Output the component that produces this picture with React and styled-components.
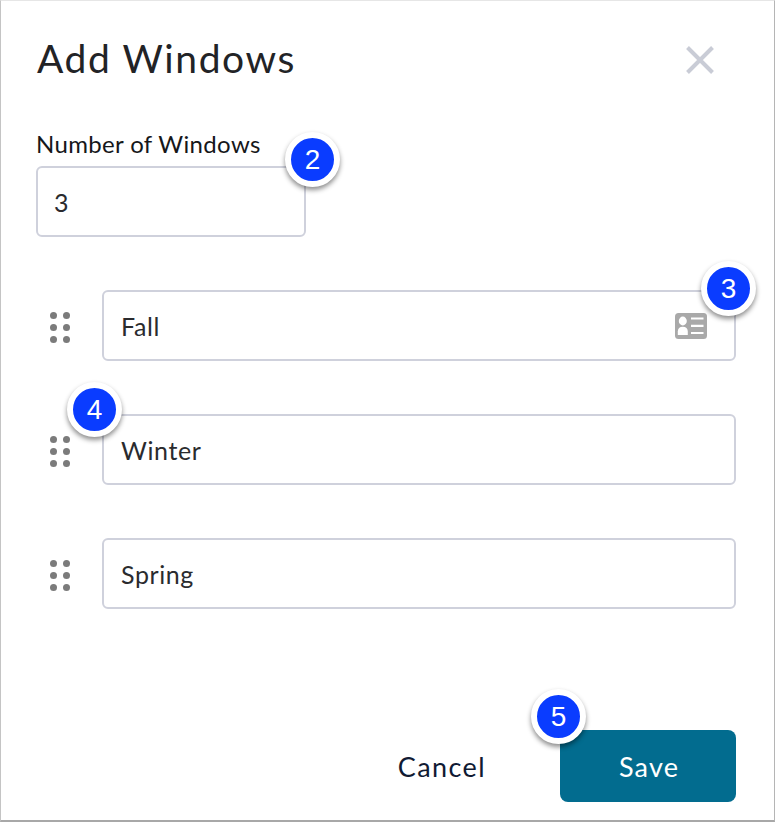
import { createGlobalStyle } from "styled-components";
import styled from "styled-components";

const FONT = '"Lato", "Liberation Sans", sans-serif';

const GlobalStyle = createGlobalStyle`
  html, body {
    margin: 0;
    padding: 0;
    background: #fff;
  }
`;

const Modal = styled.div`
  box-sizing: border-box;
  width: 775px;
  height: 822px;
  padding: 38px 38px 18px 35px;
  display: flex;
  flex-direction: column;
  background: #fff;
  border-top: 1px solid #e6e6e6;
  border-left: 1px solid #c4c4c4;
  border-right: 1px solid #b5b5b5;
  border-bottom: 2px solid #a8a8a8;
  font-family: ${FONT};
`;

const Header = styled.div`
  display: flex;
  align-items: center;
  justify-content: space-between;
  height: 42px;
  padding-left: 1px;
  padding-right: 22px;
`;

const Title = styled.h1`
  margin: -4px 0 0;
  font-size: 39px;
  font-weight: 400;
  letter-spacing: 1.6px;
  color: #222326;
`;

const CloseIcon = styled.svg`
  display: block;
  width: 28px;
  height: 28px;
`;

const Label = styled.label`
  display: block;
  margin-top: 50px;
  height: 25px;
  line-height: 25px;
  font-size: 24px;
  letter-spacing: 0.35px;
  color: #16171a;
`;

const Field = styled.div`
  position: relative;
  box-sizing: border-box;
  display: flex;
  align-items: center;
  justify-content: space-between;
  flex: ${(p) => (p.$fixed ? "none" : 1)};
  width: ${(p) => (p.$fixed ? "270px" : "auto")};
  height: 71px;
  padding: 0 27px 0 ${(p) => (p.$fixed ? 16 : 17)}px;
  border: 2px solid #cfd1dc;
  border-radius: 6px;
  font-size: 25px;
  letter-spacing: 0.6px;
  color: #2a2b2e;
`;

const NumberField = styled(Field)`
  margin-top: 10px;
`;

const WindowList = styled.div`
  display: flex;
  flex-direction: column;
  gap: 53px;
  margin-top: 53px;
`;

const WindowRow = styled.div`
  display: flex;
  align-items: center;
  gap: 32px;
  margin-left: 14px;
`;

const Grip = styled.div`
  display: grid;
  grid-template-columns: 7px 7px;
  grid-auto-rows: 7px;
  column-gap: 6px;
  row-gap: 5px;
  flex: none;
  margin-top: 4px;
`;

const Dot = styled.span`
  border-radius: 50%;
  background: #7b7b7b;
`;

const Badge = styled.div`
  position: absolute;
  top: ${(p) => p.$top}px;
  left: ${(p) => p.$left}px;
  box-sizing: content-box;
  width: 43px;
  height: 43px;
  display: flex;
  align-items: center;
  justify-content: center;
  border: 6px solid #fff;
  border-radius: 50%;
  background: #0a3cff;
  box-shadow: 0 3px 5px rgba(0, 0, 0, 0.45);
  color: #fff;
  font-family: "Liberation Sans", sans-serif;
  font-size: 28px;
  letter-spacing: 0;
  z-index: 2;
`;

const Footer = styled.div`
  margin-top: auto;
  display: flex;
  align-items: center;
  justify-content: flex-end;
  gap: 74px;
`;

const CancelButton = styled.button`
  padding: 0;
  border: 0;
  background: none;
  font-family: ${FONT};
  font-size: 27px;
  letter-spacing: 1.4px;
  color: #101a33;
`;

const SaveButton = styled.button`
  position: relative;
  width: 176px;
  height: 72px;
  padding: 0 0 0 2px;
  border: 0;
  border-radius: 8px;
  background: #026c8f;
  font-family: ${FONT};
  font-size: 27px;
  letter-spacing: 1.2px;
  color: #fff;
`;

const GripDots = () => (
  <Grip>
    {Array.from({ length: 6 }, (_, i) => (
      <Dot key={i} />
    ))}
  </Grip>
);

const CardIcon = () => (
  <svg width="32" height="26" viewBox="0 0 32 26" aria-hidden="true">
    <rect width="32" height="26" rx="3.5" fill="#a9a9a9" />
    <ellipse cx="7.8" cy="8" rx="4" ry="4.4" fill="#fff" />
    <path d="M2.8 22v-3.5c0-3 1.8-4.7 5-4.7s5 1.7 5 4.7V22z" fill="#fff" />
    <path d="M16 5.5h12.5M16 12.8h12.5M16 20h12.5" stroke="#fff" strokeWidth="2.2" />
  </svg>
);

export default function App() {
  return (
    <>
      <GlobalStyle />
      <Modal>
        <Header>
          <Title>Add Windows</Title>
          <CloseIcon viewBox="0 0 28 28" aria-hidden="true">
            <path d="M1.5 1.5l25 25M26.5 1.5l-25 25" stroke="#c9ccd6" strokeWidth="4" />
          </CloseIcon>
        </Header>

        <Label>Number of Windows</Label>
        <NumberField $fixed>
          3
          <Badge $top={-36} $left={247}>2</Badge>
        </NumberField>

        <WindowList>
          <WindowRow>
            <GripDots />
            <Field>
              Fall
              <CardIcon />
              <Badge $top={-31} $left={597}>3</Badge>
            </Field>
          </WindowRow>
          <WindowRow>
            <GripDots />
            <Field>
              Winter
              <Badge $top={-34} $left={-37}>4</Badge>
            </Field>
          </WindowRow>
          <WindowRow>
            <GripDots />
            <Field>Spring</Field>
          </WindowRow>
        </WindowList>

        <Footer>
          <CancelButton>Cancel</CancelButton>
          <SaveButton>
            Save
            <Badge $top={-41} $left={-29}>5</Badge>
          </SaveButton>
        </Footer>
      </Modal>
    </>
  );
}
